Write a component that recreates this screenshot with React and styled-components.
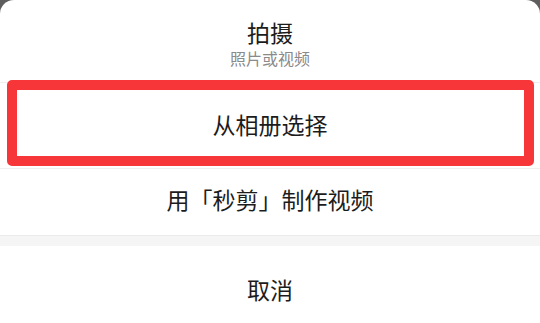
import React from 'react'
import styled, { createGlobalStyle } from 'styled-components'

const GlobalStyle = createGlobalStyle`
    html, body {
        margin: 0;
        padding: 0;
        background: #5e5e5e;
        font-family: "Noto Sans CJK SC", "Noto Sans", sans-serif;
    }
`;

const Sheet = styled.div`
    width: 540px;
    height: 323px;
    background: #fff;
    border-radius: 14px 14px 0 0;
    overflow: hidden;
    display: flex;
    flex-direction: column;
    & > *{
        flex-shrink: 0;
    }
`;

const Header = styled.div`
    height: 82px;
    display: flex;
    flex-direction: column;
    align-items: center;
    justify-content: center;
    border-bottom: 1px solid #efefef;
    .title{
        font-size: 23px;
        line-height: 28px;
        color: #1c1c1c;
        margin-top: 3px;
    }
    .sub{
        font-size: 16px;
        line-height: 20px;
        color: #8a8a8a;
        margin-top: 2px;
    }
`;

const Option = styled.div`
    position: relative;
    height: ${p => p.$h}px;
    display: flex;
    align-items: center;
    justify-content: center;
    font-size: 23px;
    color: #1c1c1c;
    border-bottom: ${p => p.$line ? '1px solid #efefef' : 'none'};
    &::after{
        content: '';
        display: ${p => p.$marked ? 'block' : 'none'};
        position: absolute;
        top: -3px;
        bottom: 2px;
        left: 7px;
        right: 6px;
        border: 10px solid #f73639;
        border-radius: 5px;
    }
    span{
        margin-top: ${p => p.$shift || 0}px;
    }
`;

const Gap = styled.div`
    height: 10px;
    background: #f5f5f5;
    border-top: 1px solid #ebebeb;
`;

function App() {
    return (
        <>
            <GlobalStyle />
            <Sheet>
                <Header>
                    <div className="title">拍摄</div>
                    <div className="sub">照片或视频</div>
                </Header>
                <Option $h={85} $line $marked $shift={-4}><span>从相册选择</span></Option>
                <Option $h={66} $shift={-6}><span>用「秒剪」制作视频</span></Option>
                <Gap />
                <Option $h={86} $shift={-1}><span>取消</span></Option>
            </Sheet>
        </>
    )
}

export default App;
